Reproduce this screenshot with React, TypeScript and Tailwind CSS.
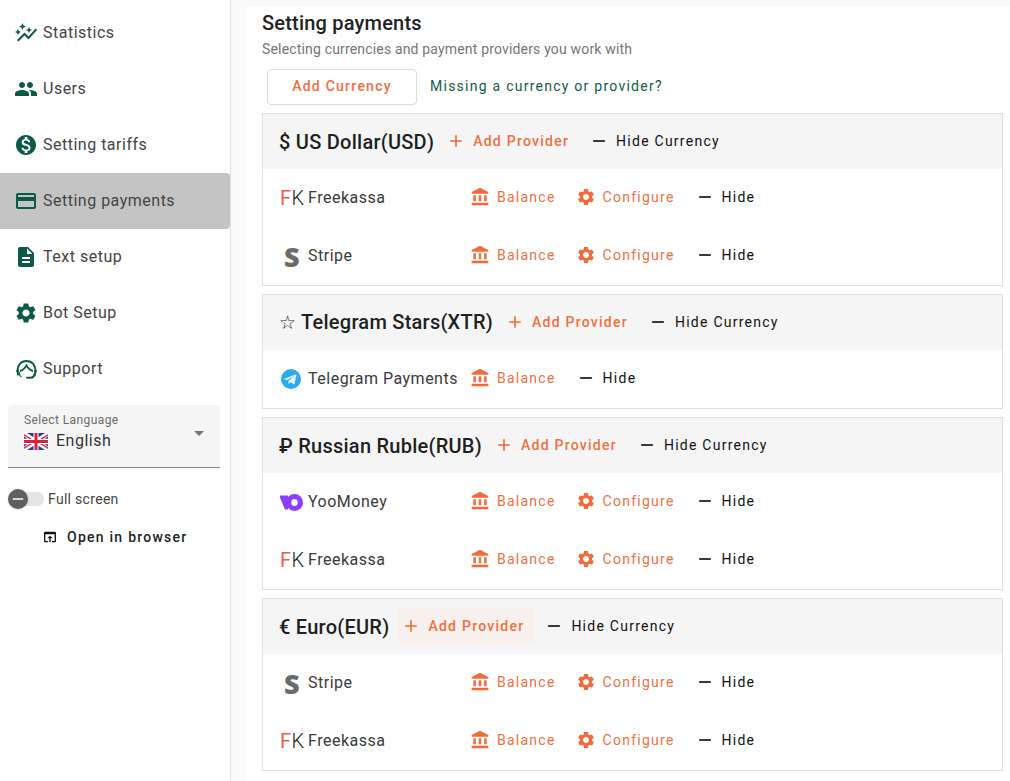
import React from "react";
import {
  MdAutoGraph, MdPeople, MdMonetizationOn, MdCreditCard, MdDescription, MdSettings,
  MdAdd, MdRemove, MdAccountBalance, MdOpenInBrowser, MdArrowDropDown,
} from "react-icons/md";

const SupportIcon = () => (
  <svg viewBox="0 0 24 24" className="w-6 h-6 shrink-0" fill="none" stroke="#0b5a47">
    <path d="M3.500 15C3.500 8 7 4 12.500 4S21.500 8 21.500 15" strokeWidth="2" />
    <path d="M6 14C9 13.500 11 11 12.500 8.500C14 11 16 13.500 19 14" strokeWidth="1.800" />
    <path d="M5.500 15v2c0 1.500 1 2.500 2 3" strokeWidth="1.200" />
    <path d="M2.200 13h2.600v5.500H3.200z M20.200 13h2.600l-1 5.500h-1.600z" fill="#0b5a47" stroke="none" />
    <path d="M20.500 17.500c-.3 2-2 3.200-4 3.200h-3.500" strokeWidth="2" strokeLinecap="round" />
  </svg>
);

const Flag = () => (
  <svg viewBox="0 0 24 17" className="w-6 h-[17px] shrink-0 rounded-[2px]">
    <rect width="24" height="17" fill="#fff" />
    <path d="M0 1l8 5H5.500L0 2.700zM24 1l-8 5h2.500L24 2.700zM0 16l8-5H5.500L0 14.300zM24 16l-8-5h2.500L24 14.300z" fill="#d8223a" />
    <path d="M3 0l6.500 4.200V0zM21 0l-6.500 4.200V0zM3 17l6.500-4.200V17zM21 17l-6.500-4.200V17zM0 3.600V5.800h3.500zM24 3.600V5.800h-3.500zM0 13.400V11.200h3.500zM24 13.400V11.200h-3.500z" fill="#2b3f8c" />
    <path d="M10 0h4v17h-4z" fill="#fff" />
    <path d="M0 6h24v5H0z" fill="#fff" />
    <path d="M10.500 0h3v17h-3zM0 7h24v3H0z" fill="#d8223a" />
  </svg>
);

const nav = [
  { label: "Statistics", icon: <MdAutoGraph size={24} color="#0b5a47" className="shrink-0" /> },
  { label: "Users", icon: <MdPeople size={24} color="#0b5a47" className="shrink-0" /> },
  { label: "Setting tariffs", icon: <MdMonetizationOn size={24} color="#0b5a47" className="shrink-0" /> },
  { label: "Setting payments", icon: <MdCreditCard size={24} color="#0b5a47" className="shrink-0" />, active: true },
  { label: "Text setup", icon: <MdDescription size={24} color="#0b5a47" className="shrink-0" /> },
  { label: "Bot Setup", icon: <MdSettings size={24} color="#0b5a47" className="shrink-0" /> },
  { label: "Support", icon: <SupportIcon /> },
];

const Sidebar = () => (
  <aside className="w-[231px] shrink-0 h-full bg-white border-r border-[#e0e0e0] pt-[5px]">
    {nav.map((n) => (
      <div
        key={n.label}
        className={`h-14 flex items-center pl-[14px] gap-[5px] rounded-r text-base tracking-[0.5px] text-[#444] ${n.active ? "bg-[#c4c4c4]" : ""}`}
      >
        {n.icon}
        <span>{n.label}</span>
      </div>
    ))}
    <div className="mt-2 ml-2 mr-[10px] h-[63px] bg-[#f5f5f5] border-b border-[#8a8a8a] rounded-t relative pl-4 pt-[8px]">
      <div className="text-xs leading-[14px] tracking-[0.4px] text-[#6b6b6b]">Select Language</div>
      <div className="flex items-center gap-2 mt-[4px] text-base leading-5 tracking-[0.5px] text-[#333]">
        <Flag />
        <span>English</span>
      </div>
      <MdArrowDropDown size={24} color="#757575" className="absolute right-[9px] top-[16px]" />
    </div>
    <div className="flex items-center h-5 mt-[21px] ml-2">
      <div className="w-9 h-[14px] rounded-full bg-[#e4e4e4] relative">
        <div className="absolute left-0 -top-[3px] w-5 h-5 rounded-full bg-[#5f5f5f] shadow flex items-center justify-center">
          <MdRemove size={18} color="#fff" />
        </div>
      </div>
      <span className="ml-1 text-sm tracking-[0.3px] text-[#444]">Full screen</span>
    </div>
    <div className="flex items-center mt-[18px] ml-[42px] gap-[9px] text-sm font-medium tracking-[1.25px] text-[#1e1e1e]">
      <MdOpenInBrowser size={16} color="#111" />
      <span>Open in browser</span>
    </div>
  </aside>
);

const Btn = ({ icon, label, dark, gap, pad, extra, weight }: { icon: React.ReactNode; label: string; dark?: boolean; gap: string; pad: string; extra?: string; weight: string }) => (
  <div className={`flex items-center h-9 rounded ${gap} ${pad} ${extra ?? ""} ${weight} text-sm tracking-[1.25px] ${dark ? "text-[#111]" : "text-[#f0703f]"}`}>
    {icon}
    <span>{label}</span>
  </div>
);

const Orange = { color: "#f26b3a" };

const Logo = ({ kind }: { kind: string }) => {
  if (kind === "fk")
    return (
      <span className="w-6 text-[20px] leading-none font-light flex justify-between">
        <span className="text-[#ee5b4b] font-normal">F</span>
        <span className="text-[#222]">K</span>
      </span>
    );
  if (kind === "stripe")
    return <span className="w-6 text-center text-[27px] leading-none font-extrabold text-[#6b6b6b] font-['Open_Sans',sans-serif]">S</span>;
  if (kind === "tg")
    return (
      <svg viewBox="0 0 24 24" className="w-6 h-6">
        <circle cx="11" cy="12" r="10" fill="#2aabee" />
        <path d="M4.500 11.800l11-4.400c.6-.2 1 .1.900.8l-1.800 8.600c-.1.600-.6.800-1.100.5l-2.900-2.100-1.500 1.400c-.2.200-.4.300-.7.200l.2-3 5.300-4.800-6.700 4.100-2.800-.9c-.6-.2-.6-.6.100-.9z" fill="#e8f4fb" />
      </svg>
    );
  return (
    <svg viewBox="1 0 24 24" className="w-6 h-6">
      <path d="M0 5.500h9v14H6z" fill="#8b3ffd" />
      <circle cx="15.500" cy="12.500" r="8.500" fill="#8b3ffd" />
      <ellipse cx="15.500" cy="12.500" rx="3.200" ry="3.500" fill="#fff" />
    </svg>
  );
};

const Row = ({ kind, name, noConfig }: { kind: string; name: string; noConfig?: boolean }) => (
  <div className="h-14 mb-[2px] flex items-center pl-[17px]">
    <div className="w-[185px] shrink-0 flex items-center gap-1 mt-[2px] text-base tracking-[0.5px] text-[#3a3a3a]">
      <Logo kind={kind} />
      <span>{name}</span>
    </div>
    <div className="flex items-center gap-[9px]">
      <Btn icon={<MdAccountBalance size={20} style={Orange} />} label="Balance" gap="gap-[7px]" pad="pl-[5px] pr-[7px]" weight="font-normal" />
      {!noConfig && <Btn icon={<MdSettings size={20} style={Orange} />} label="Configure" gap="gap-[7px]" pad="pl-1 pr-[7px]" weight="font-normal" />}
      <Btn icon={<MdRemove size={20} color="#111" />} label="Hide" dark gap="gap-[7px]" pad="pl-1 pr-2" weight="font-normal" />
    </div>
  </div>
);

const Card = ({ title, glyph, hover, children }: { title: string; glyph: React.ReactNode; hover?: boolean; children: React.ReactNode }) => (
  <section className="border border-[#e0e0e0] mb-2 mr-[7px]">
    <header className="h-[55px] bg-[#f5f5f5] flex items-center pl-4">
      <h2 className="text-xl font-medium text-[#1f1f1f] tracking-[0.25px] mr-2">{glyph} {title}</h2>
      <div className="flex items-center mb-[2px]">
        <Btn icon={<MdAdd size={20} style={Orange} />} label="Add Provider" gap="gap-[7px]" pad="pl-1 pr-[10px]" extra={hover ? "bg-[#f7f0ed]" : ""} weight="font-medium" />
        <div className="w-[6px]" />
        <Btn icon={<MdRemove size={20} color="#111" />} label="Hide Currency" dark gap="gap-[7px]" pad="pl-1 pr-2" weight="font-normal" />
      </div>
    </header>
    {children}
  </section>
);

export default function App() {
  return (
    <div className="w-[1010px] h-[781px] overflow-hidden flex bg-[#fafafa] font-['Roboto',sans-serif]">
      <Sidebar />
      <div className="w-[15px] shrink-0" />
      <main className="flex-1 mt-[7px] bg-white pl-4 pr-0 min-w-0">
        <h1 className="text-xl leading-[32px] font-medium text-[#222] tracking-[0.2px]">Setting payments</h1>
        <p className="text-sm leading-5 text-[#757575] tracking-[0.17px]">Selecting currencies and payment providers you work with</p>
        <div className="flex items-center mt-[10px] ml-[5px] mb-2">
          <div className="w-[150px] h-9 rounded border border-[#dcdcdc] flex items-center justify-center text-sm font-medium tracking-[1.25px] text-[#f0703f]">
            <span className="-mt-[2px]">Add Currency</span>
          </div>
          <span className="ml-[13px] -mt-[2px] text-sm tracking-[1.25px] text-[#0f5c4a]">Missing a currency or provider?</span>
        </div>
        <Card glyph="$" title="US Dollar(USD)">
          <Row kind="fk" name="Freekassa" />
          <Row kind="stripe" name="Stripe" />
        </Card>
        <Card glyph={<span className="text-[19px] font-normal">☆</span>} title="Telegram Stars(XTR)">
          <Row kind="tg" name="Telegram Payments" noConfig />
        </Card>
        <Card glyph="₽" title="Russian Ruble(RUB)">
          <Row kind="yoo" name="YooMoney" />
          <Row kind="fk" name="Freekassa" />
        </Card>
        <Card glyph="€" title="Euro(EUR)" hover>
          <Row kind="stripe" name="Stripe" />
          <Row kind="fk" name="Freekassa" />
        </Card>
      </main>
    </div>
  );
}
